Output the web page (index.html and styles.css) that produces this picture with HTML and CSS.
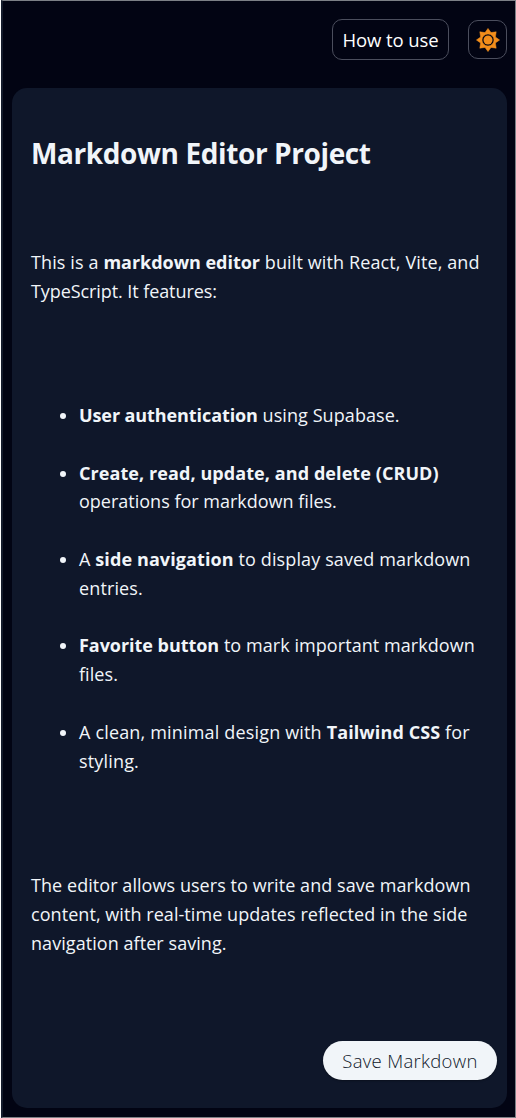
FILE: index.html
```html
<!DOCTYPE html>
<html lang="en">
<head>
<meta charset="utf-8">
<title>Markdown Editor</title>
<link rel="stylesheet" href="styles.css">
</head>
<body>
<div class="app">
  <header class="toolbar">
    <button class="help">How to use</button>
    <button class="theme" aria-label="Toggle theme">
      <svg width="24" height="24" viewBox="0 0 24 24"><path fill="#f38e1b" stroke="#f38e1b" stroke-width=".5" stroke-linejoin="round" fill-rule="evenodd" d="M12 .4 15 4.6 20.2 3.8 19.4 9 23.6 12 19.4 15 20.2 20.2 15 19.4 12 23.6 9 19.4 3.8 20.2 4.6 15 .4 12 4.6 9 3.8 3.8 9 4.6ZM12 6a6 6 0 1 0 0 12a6 6 0 1 0 0-12Z"/><circle cx="12" cy="12" r="4.5" fill="#f38e1b"/></svg>
    </button>
  </header>
  <main class="card">
    <article class="content">
      <h1 class="title">Markdown Editor Project</h1>
      <p class="intro">This is a <strong>markdown editor</strong> built with React, Vite, and<br><span class="snug">TypeScript. It features:</span></p>
      <ul class="features">
        <li class="auth"><strong>User authentication</strong> using Supabase.</li>
        <li class="crud"><strong>Create, read, update, and delete (CRUD)</strong><br>operations for markdown files.</li>
        <li class="nav">A <strong>side navigation</strong> to display saved markdown<br>entries.</li>
        <li class="favorite"><strong>Favorite button</strong> to mark important markdown<br>files.</li>
        <li class="design">A clean, minimal design with <strong>Tailwind CSS</strong> for<br>styling.</li>
      </ul>
      <p class="outro">The editor allows users to write and save markdown<br>content, with real-time updates reflected in the side<br>navigation after saving.</p>
    </article>
    <button class="save">Save Markdown</button>
  </main>
</div>
</body>
</html>
```
FILE: styles.css
```css
* { box-sizing: border-box; }
body { margin: 0; background: #fff; font-family: "Open Sans", "Noto Sans", sans-serif; }
button { font-family: inherit; padding: 0; white-space: nowrap; }
.app {
  height: 1118px;
  margin-left: 1px;
  padding: 18px 8px 9px 9px;
  background: #020413;
  border: 1px solid #7c8086;
  border-left: 2px solid #151c2d;
  display: flex;
  flex-direction: column;
}
.toolbar { display: flex; justify-content: flex-end; align-items: center; gap: 19px; height: 41px; margin-bottom: 28px; }
.help { width: 117px; height: 41px; border: 1px solid #4b4e5d; border-radius: 10px; background: none; color: #fff; font-size: 18.5px; letter-spacing: -0.1px; }
.theme { width: 39px; height: 39px; border: 1px solid #4b4e5d; border-radius: 10px; background: none; display: flex; align-items: center; justify-content: center; }
.card { flex: 1; display: flex; flex-direction: column; background: #0f172a; border-radius: 15px; padding: 45px 10px 28px 19px; }
.content { flex: 1; color: #f1f5f9; font-size: 18px; line-height: 28.8px; letter-spacing: 0.07px; white-space: nowrap; }
.content strong { letter-spacing: -0.03px; }
.title { margin: 0 0 75.2px; font-size: 28px; line-height: 40px; font-weight: 700; letter-spacing: -0.4px; }
.intro, .outro { margin: 0; }
.intro { letter-spacing: 0.12px; }
.snug { letter-spacing: -0.08px; }
.features { margin: 95.2px 0 96px; padding-left: 48px; display: flex; flex-direction: column; gap: 28.8px; }
.auth strong { letter-spacing: -0.09px; }
.crud { letter-spacing: 0; }
.crud strong { letter-spacing: 0.08px; }
.nav { letter-spacing: 0.12px; }
.nav strong { letter-spacing: 0.1px; }
.favorite { letter-spacing: 0.06px; }
.favorite strong { letter-spacing: -0.04px; }
.design { letter-spacing: 0.17px; }
.design strong { letter-spacing: 0.1px; }
.outro { letter-spacing: 0.06px; }
.save { align-self: flex-end; width: 174px; height: 39px; border: 0; border-radius: 20px; background: #f1f5f9; color: #0f172a; font-size: 18.5px; font-weight: 300; letter-spacing: 0.3px; box-shadow: 0 1px 2px rgba(0,0,0,.3); }
```
